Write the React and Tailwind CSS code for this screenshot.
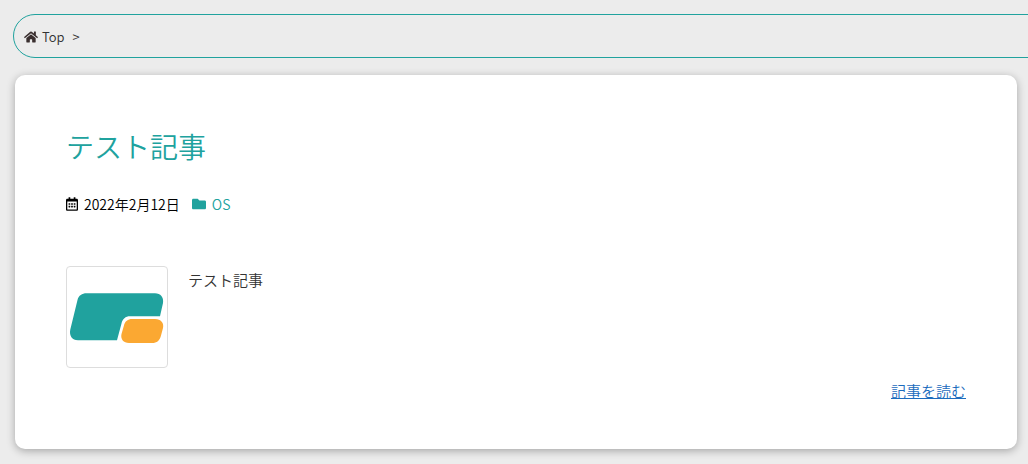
import React from "react";
import { FaFolder, FaHome, FaRegCalendarAlt } from "react-icons/fa";

const posts = [
    { id: 1, title: "テスト記事", date: "2022年2月12日", dateTime: "2022-02-12", category: "OS", excerpt: "テスト記事" },
]

function Breadcrumb() {
    return (
        <nav className="-mr-12 flex h-11 items-center rounded-full border border-[#20a29e] px-2.5 pt-0.5 text-[13px] text-[#333333]" aria-label="Breadcrumb">
            <a className="flex items-center gap-1" href="/">
                <FaHome className="size-3.5 text-[#3a2f2f]" />
                <span>Top</span>
            </a>
            <span className="ml-2">&gt;</span>
        </nav>
    )
}

function Thumbnail() {
    return (
        <figure className="size-[102px] shrink-0 rounded border border-[#dddddd]">
            <svg className="size-full" viewBox="0 0 100 100" aria-hidden="true">
                <path fill="#20a29e" d="M19.5 26.3H88C93.5 26.3 97 30.5 96 36L93 49.3H63C58.5 49.3 55.5 52 54.5 56.5L50 73.3H11C5 73.3 2 68.5 3.3 62.5L10.5 33C11.7 28.5 15 26.3 19.5 26.3Z" />
                <path fill="#fba832" d="M65 52H88C94 52 97.2 56 96 61L94 68.5C92.8 73.5 90 76 85 76H62C56.5 76 53.3 72 54.5 67L56.8 59C58 54 61 52 65 52Z" />
            </svg>
        </figure>
    )
}

function PostCard({ post }) {
    return (
        <article className="rounded-[10px] bg-white px-[51px] pt-[49px] pb-11 shadow-[0_2px_8px_rgba(0,0,0,0.3)]">
            <h2 className="text-[28px] leading-11 text-[#20a29e]">
                <a href="/test">{post.title}</a>
            </h2>

            <div className="mt-6 flex items-center gap-3 text-sm leading-6">
                <span className="flex items-center gap-1.5 text-black">
                    <FaRegCalendarAlt className="w-3 h-3.5" />
                    <time dateTime={post.dateTime}>{post.date}</time>
                </span>
                <a className="flex items-center gap-1.5 text-[#20a29e]" href="/category/os">
                    <FaFolder className="size-3.5" />
                    <span>{post.category}</span>
                </a>
            </div>

            <div className="mt-[50px] flex gap-5">
                <Thumbnail />
                <p className="text-[15px] leading-7 text-[#333333]">{post.excerpt}</p>
            </div>

            <p className="mt-[9px] text-right text-[15px] leading-7">
                <a className="text-[#1b6bbd] underline" href="/test">記事を読む</a>
            </p>
        </article>
    )
}

function App() {
    return (
        <main className="min-h-screen overflow-hidden bg-[#ececec] pt-3.5 pb-[15px] pr-[11px] pl-[13px] font-[350] font-['Noto_Sans_CJK_JP',sans-serif]">
            <Breadcrumb />
            <div className="mt-[17px] ml-0.5 flex flex-col gap-4">
                {posts.map((post) => <PostCard key={post.id} post={post} />)}
            </div>
        </main>
    )
}

export default App;
